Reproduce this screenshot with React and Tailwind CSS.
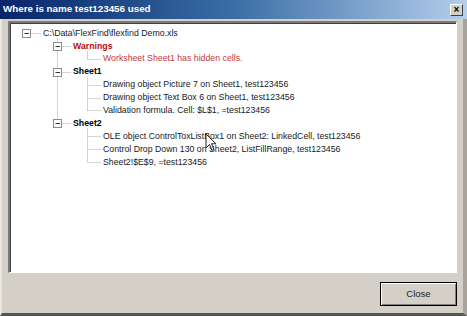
const FONT = { fontFamily: '"Liberation Sans", Arial, sans-serif' }

const ROWS = [
  { level: 0, text: 'C:\\Data\\FlexFind\\flexfind Demo.xls', box: true },
  { level: 1, text: 'Warnings', box: true, kind: 'warnHead' },
  { level: 2, text: 'Worksheet Sheet1 has hidden cells.', kind: 'warn' },
  { level: 1, text: 'Sheet1', box: true, kind: 'head' },
  { level: 2, text: 'Drawing object Picture 7 on Sheet1, test123456' },
  { level: 2, text: 'Drawing object Text Box 6 on Sheet1, test123456' },
  { level: 2, text: 'Validation formula. Cell: $L$1, =test123456' },
  { level: 1, text: 'Sheet2', box: true, kind: 'head' },
  { level: 2, text: 'OLE object ControlToxListBox1 on Sheet2: LinkedCell, test123456' },
  { level: 2, text: 'Control Drop Down 130 on Sheet2, ListFillRange, test123456' },
  { level: 2, text: 'Sheet2!$E$9, =test123456' },
]

const ROW_H = 12.9
const TOP = 2.6
const rowY = (i) => TOP + ROW_H * i + ROW_H / 2

function Expander({ x, y }) {
  return (
    <g>
      <rect x={x - 4} y={y - 4} width="8" height="8" fill="#fff" stroke="#8c8c8c" strokeWidth="1" />
      <line x1={x - 2} y1={y} x2={x + 2.5} y2={y} stroke="#333" strokeWidth="1" />
    </g>
  )
}

function TreeLines() {
  const dot = { stroke: '#a8a8a8', strokeWidth: 1, strokeDasharray: '1 1' }
  const ys = ROWS.map((_, i) => Math.round(rowY(i)) + 0.5)
  const groups = [
    { head: 1, kids: [2] },
    { head: 3, kids: [4, 5, 6] },
    { head: 7, kids: [8, 9, 10] },
  ]
  return (
    <svg className="pointer-events-none absolute inset-0" width="447" height="251">
      {/* root */}
      <line x1="19.5" y1={ys[0]} x2="30" y2={ys[0]} {...dot} />
      <line x1="46.5" y1={ys[0] + 5} x2="46.5" y2={ys[7]} {...dot} />
      {groups.map((g) => (
        <g key={g.head}>
          <line x1="50.5" y1={ys[g.head]} x2="60" y2={ys[g.head]} {...dot} />
          <line x1="76.5" y1={ys[g.head] + 5} x2="76.5" y2={ys[g.kids[g.kids.length - 1]]} {...dot} />
          {g.kids.map((k) => (
            <line key={k} x1="76.5" y1={ys[k]} x2="90" y2={ys[k]} {...dot} />
          ))}
        </g>
      ))}
      <Expander x={15.5} y={ys[0]} />
      {groups.map((g) => (
        <Expander key={g.head} x={46.5} y={ys[g.head]} />
      ))}
    </svg>
  )
}

function Cursor() {
  return (
    <svg className="pointer-events-none absolute left-[194px] top-[109px]" width="14" height="20" viewBox="0 0 14 20">
      <path d="M1 1 L1 15 L4.5 11.5 L7 17.5 L9 16.5 L6.5 10.8 L11 10.8 Z" fill="#fff" stroke="#222" strokeWidth="1" strokeLinejoin="round" />
    </svg>
  )
}

function Row({ row }) {
  const pad = row.level === 0 ? 'pl-[32px]' : row.level === 1 ? 'pl-[62px]' : 'pl-[92px]'
  let color = 'text-[#1a1a1a]'
  if (row.kind === 'warnHead') color = 'text-[#b80f0f] font-bold'
  if (row.kind === 'head') color = 'text-black font-bold'
  if (row.kind === 'warn') color = 'text-[#c23a3a]'
  return (
    <div className={`flex h-[12.9px] items-center whitespace-nowrap text-[8.75px] leading-none ${pad} ${color}`}>
      {row.text}
    </div>
  )
}

export default function App() {
  return (
    <div className="flex h-[316px] w-[467px] flex-col overflow-hidden bg-[#d4d0c8]" style={FONT}>
      <div className="flex h-[19px] items-center justify-between bg-gradient-to-r from-[#0a246a] via-[#3a6ea5] to-[#b5cfec] pl-[3px] pr-[4px]">
        <span className="text-[9.8px] font-bold text-white">Where is name test123456 used</span>
        <div className="flex h-[12px] w-[13px] items-center justify-center border border-t-white border-l-white border-r-[#404040] border-b-[#404040] bg-[#d4d0c8] text-[10px] font-bold leading-none text-black">
          ×
        </div>
      </div>
      <div className="flex flex-1 flex-col border-r-[4px] border-b-[3px] border-l-[2px] border-r-[#a8a49c] border-b-[#555] border-l-[#e8e6e0] px-[6px] pt-[2px]">
        <div className="h-[252px] border-t-2 border-l-2 border-r border-b border-t-[#7a7a7a] border-l-[#7a7a7a] border-r-white border-b-white">
          <div className="relative h-full border-t border-l border-t-[#404040] border-l-[#404040] bg-white pt-[2.6px]">
            {ROWS.map((r, i) => (
              <Row key={i} row={r} />
            ))}
            <TreeLines />
            <Cursor />
          </div>
        </div>
        <div className="flex flex-1 items-start justify-end pt-[9px]">
          <button className="flex h-[24px] w-[77px] items-center justify-center border border-black bg-[#d4d0c8] text-[9.5px] text-[#222] shadow-[inset_1px_1px_0_#fff,inset_-1px_-1px_0_#808080]">
            Close
          </button>
        </div>
      </div>
    </div>
  )
}
